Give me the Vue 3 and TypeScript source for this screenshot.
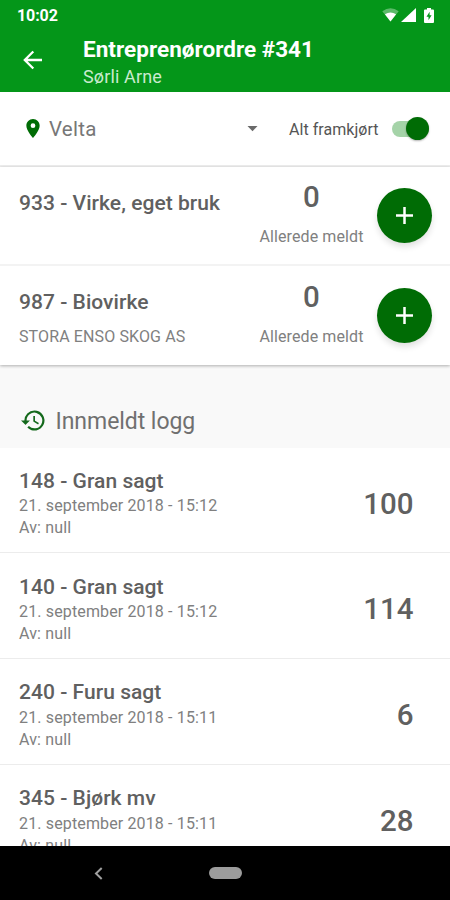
<script setup lang="ts">
interface Product {
  name: string
  buyer: string
  reported: number
}

interface LogEntry {
  name: string
  date: string
  by: string
  amount: number
}

const products: Product[] = [
  { name: '933 - Virke, eget bruk', buyer: '', reported: 0 },
  { name: '987 - Biovirke', buyer: 'STORA ENSO SKOG AS', reported: 0 },
]

const entries: LogEntry[] = [
  { name: '148 - Gran sagt', date: '21. september 2018 - 15:12', by: 'null', amount: 100 },
  { name: '140 - Gran sagt', date: '21. september 2018 - 15:12', by: 'null', amount: 114 },
  { name: '240 - Furu sagt', date: '21. september 2018 - 15:11', by: 'null', amount: 6 },
  { name: '345 - Bjørk mv', date: '21. september 2018 - 15:11', by: 'null', amount: 28 },
]
</script>

<template>
  <div class="screen">
    <header class="header">
      <div class="status">
        <span class="clock">10:02</span>
        <div class="status-icons">
          <svg class="wifi" width="17" height="14" viewBox="0 0 17 14">
            <path d="M8.5 13.5L.3 3.2Q8.5-2.6 16.7 3.2z" fill="#fff" opacity=".35" />
            <path d="M8.5 13.5L2.9 6.3Q8.5 2.5 14.1 6.3z" fill="#fff" />
          </svg>
          <svg class="signal" width="15" height="14" viewBox="0 0 15 14">
            <path d="M0 14L15 0V14z" fill="#fff" />
          </svg>
          <svg class="battery" width="10" height="15" viewBox="0 0 10 15">
            <path d="M3 0h4v1.5h2q1 0 1 1V14q0 1-1 1H1q-1 0-1-1V2.500q0-1 1-1h2z" fill="#fff" />
            <path d="M5.600 3.800L2.500 8.700h2v3.600l3.100-5h-2z" fill="#049619" />
          </svg>
        </div>
      </div>
      <div class="appbar">
        <svg class="back" width="20" height="20" viewBox="0 0 20 20">
          <path d="M19 10H2.200M10.300 1.500L1.800 10l8.500 8.500" fill="none" stroke="#fff" stroke-width="2.300" />
        </svg>
        <div class="titles">
          <h1 class="title">Entreprenørordre #341</h1>
          <div class="subtitle">Sørli Arne</div>
        </div>
      </div>
    </header>

    <main class="content">
      <section class="filter">
        <svg class="pin" width="14" height="19" viewBox="0 0 14 20">
          <path d="M7 0C3.100 0 0 3.100 0 7c0 5.200 7 13 7 13s7-7.800 7-13c0-3.900-3.100-7-7-7zm0 9.500a2.500 2.500 0 1 1 0-5 2.500 2.500 0 0 1 0 5z" fill="#006c05" />
        </svg>
        <span class="place">Velta</span>
        <svg class="caret" width="11" height="6" viewBox="0 0 11 6">
          <path d="M.5 0h10L5.500 5.300z" fill="#6a6a6a" />
        </svg>
        <span class="switch-label">Alt framkjørt</span>
        <div class="switch"><span class="knob"></span></div>
      </section>

      <section class="products">
        <article v-for="product in products" :key="product.name" class="product">
          <div class="product-info">
            <h2 class="name">{{ product.name }}</h2>
            <div class="buyer">{{ product.buyer }}</div>
          </div>
          <div class="reported">
            <span class="reported-count">{{ product.reported }}</span>
            <span class="reported-label">Allerede meldt</span>
          </div>
          <button class="add" type="button" aria-label="+">
            <svg width="17" height="17" viewBox="0 0 17 17">
              <path d="M8.500 0v17M0 8.500h17" stroke="#fff" stroke-width="2.500" />
            </svg>
          </button>
        </article>
      </section>

      <div class="log-head">
        <svg class="history" width="23.500" height="21" viewBox="1 3 21 18">
          <path d="M13 3a9 9 0 0 0-9 9H1l3.890 3.890.07.140L9 12H6a7 7 0 1 1 2.060 4.940l-1.420 1.420A9 9 0 1 0 13 3zm-1 5v5l4.280 2.540.72-1.210-3.500-2.080V8z" fill="#14691c" />
        </svg>
        <span class="log-title">Innmeldt logg</span>
      </div>

      <section class="log">
        <article v-for="entry in entries" :key="entry.name" class="entry">
          <div class="entry-info">
            <h2 class="name">{{ entry.name }}</h2>
            <div class="meta">{{ entry.date }}</div>
            <div class="meta">Av: {{ entry.by }}</div>
          </div>
          <span class="amount">{{ entry.amount }}</span>
        </article>
      </section>
    </main>

    <nav class="navbar">
      <svg class="nav-back" width="9" height="13" viewBox="0 0 9 13">
        <path d="M7.700 1L2 6.500l5.700 5.500" fill="none" stroke="#a0a0a0" stroke-width="2" />
      </svg>
      <span class="home"></span>
    </nav>
  </div>
</template>

<style>
body {
  margin: 0;
  background: #fff;
}
</style>

<style scoped>
.screen {
  display: flex;
  flex-direction: column;
  width: 450px;
  height: 900px;
  overflow: hidden;
  background: #fff;
  color: #606060;
  font-family: Roboto, sans-serif;
}

h1,
h2 {
  margin: 0;
}

.header {
  flex: none;
  height: 92px;
  background: #049619;
  color: #fff;
}

.status {
  display: flex;
  justify-content: space-between;
  align-items: center;
  height: 30px;
  padding: 0 16px 0 17px;
}

.clock {
  font-size: 16px;
  font-weight: 700;
  letter-spacing: -0.1px;
}

.status-icons {
  display: flex;
  align-items: center;
}

.signal {
  margin: 0 8px 0 2px;
}

.appbar {
  display: flex;
  padding-left: 23px;
}

.back {
  flex: none;
  margin: 20px 40px 0 0;
}

.titles {
  padding-top: 6px;
}

.title {
  font-size: 22.500px;
  font-weight: 700;
  letter-spacing: 0.03px;
  line-height: 26px;
  white-space: nowrap;
}

.subtitle {
  margin-top: 4px;
  color: #c9ebce;
  font-size: 18px;
  letter-spacing: 0.15px;
  line-height: 22px;
}

.content {
  flex: 1;
  min-height: 0;
  overflow: hidden;
}

.filter {
  display: flex;
  align-items: center;
  box-sizing: border-box;
  height: 74.500px;
  padding: 1px 21px 0 26px;
  border-bottom: 2px solid #eee;
}

.place {
  width: 198px;
  margin: 1px 0 0 9px;
  color: #777;
  font-size: 20.500px;
  letter-spacing: 0.25px;
}

.caret {
  flex: none;
}

.switch-label {
  flex: 1;
  margin: 1px 0 0 31px;
  color: #555;
  font-size: 16px;
  letter-spacing: 0.05px;
  white-space: nowrap;
}

.switch {
  display: flex;
  justify-content: flex-end;
  align-items: center;
  width: 37px;
  height: 16px;
  border-radius: 8px;
  background: #a5d3a8;
}

.knob {
  flex: none;
  width: 23px;
  height: 23px;
  border-radius: 50%;
  background: #006c05;
  box-shadow: 0 1px 2px rgba(0, 0, 0, 0.3);
}

.products {
  position: relative;
  box-shadow: 0 1px 3px rgba(0, 0, 0, 0.3);
}

.product {
  display: flex;
  box-sizing: border-box;
  height: 99.500px;
  padding: 0 18px 0 19px;
  border-bottom: 2px solid #f3f3f3;
}

.product:last-child {
  height: 98.500px;
  border-bottom: 0;
}

.product-info {
  flex: 1;
  padding-top: 24px;
}

.name {
  font-size: 21px;
  font-weight: 500;
  letter-spacing: 0.04px;
  line-height: 24px;
  white-space: nowrap;
}

.buyer {
  margin-top: 11.500px;
  color: #808080;
  font-size: 16px;
  letter-spacing: 0.12px;
  line-height: 22px;
}

.reported {
  display: flex;
  flex-direction: column;
  align-items: center;
  width: 105px;
  padding-top: 13.500px;
}

.reported-count {
  font-size: 29.500px;
  font-weight: 500;
  line-height: 34px;
}

.reported-label {
  margin-top: 12px;
  color: #808080;
  font-size: 16px;
  letter-spacing: 0.1px;
  line-height: 22px;
  white-space: nowrap;
}

.add {
  display: flex;
  justify-content: center;
  align-items: center;
  width: 55px;
  height: 55px;
  margin: 21.500px 0 0 13px;
  padding: 0;
  border: 0;
  border-radius: 50%;
  background: #006c05;
  box-shadow: 0 4px 6px rgba(0, 0, 0, 0.12);
}

.log-head {
  display: flex;
  align-items: center;
  box-sizing: border-box;
  height: 83px;
  padding: 28px 0 0 21px;
  background: #f9f9f9;
}

.log-title {
  margin: 3px 0 0 11px;
  color: #707070;
  font-size: 23px;
  letter-spacing: -0.05px;
}

.entry {
  display: flex;
  justify-content: space-between;
  box-sizing: border-box;
  height: 105.800px;
  padding: 21.300px 36.500px 0 19px;
  border-bottom: 1.500px solid #ececec;
}

.meta {
  color: #808080;
  font-size: 16px;
  letter-spacing: 0.14px;
  line-height: 22px;
}

.entry .name + .meta {
  margin-top: 2.600px;
}

.amount {
  margin-top: 17.800px;
  font-size: 29.500px;
  font-weight: 500;
  line-height: 34px;
}

.navbar {
  display: flex;
  flex: none;
  align-items: center;
  height: 54px;
  padding-left: 94px;
  background: #000;
}

.home {
  width: 33px;
  height: 12px;
  margin-left: 106px;
  border-radius: 6px;
  background: #9c9c9c;
}
</style>
